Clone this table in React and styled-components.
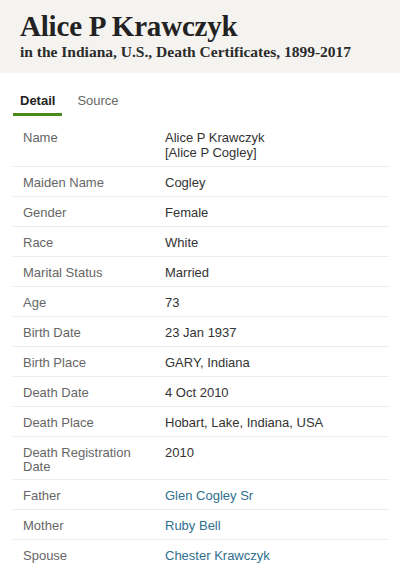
import styled, { createGlobalStyle } from "styled-components";

const GlobalStyle = createGlobalStyle`
  body {
    margin: 0;
    background: #ffffff;
    font-family: "Liberation Sans", Arial, sans-serif;
  }
`;

const Page = styled.div`
  width: 400px;
  height: 578px;
  overflow: hidden;
  background: #ffffff;
`;

const Header = styled.header`
  background: #f5f3f0;
  height: 73px;
  padding: 10px 20px 0;
  box-sizing: border-box;
`;

const Title = styled.h1`
  margin: 0;
  font-family: "Liberation Serif", "Times New Roman", serif;
  font-weight: 700;
  font-size: 29px;
  line-height: 32px;
  color: #222222;
  letter-spacing: -0.2px;
`;

const Subtitle = styled.h2`
  margin: 0;
  font-family: "Liberation Serif", "Times New Roman", serif;
  font-weight: 700;
  font-size: 15.5px;
  line-height: 20px;
  color: #2b2b2b;
  white-space: nowrap;
`;

const Tabs = styled.nav`
  display: flex;
  padding: 20px 13px 0;
`;

const Tab = styled.span`
  font-size: 13px;
  line-height: 16px;
  padding: 0 7px 4px;
  font-weight: ${(p) => (p.$active ? 700 : 400)};
  color: ${(p) => (p.$active ? "#222222" : "#666666")};
  border-bottom: 3px solid ${(p) => (p.$active ? "#4a8a1c" : "transparent")};
  margin-right: 8px;
`;

const Table = styled.div`
  margin: 6px 11px 0 13px;
`;

const Row = styled.div`
  display: grid;
  grid-template-columns: 152px 1fr;
  padding: 8px 0 6px;
  border-bottom: ${(p) => (p.$last ? "none" : "1px solid #ebebeb")};
  font-size: 13px;
  line-height: 15px;
`;

const Label = styled.div`
  padding-left: 10px;
  padding-right: 20px;
  color: #666666;
  line-height: 13.5px;
  padding-top: 1px;
`;

const Value = styled.div`
  color: #333333;
`;

const ValueLink = styled.a`
  color: #2f6f8f;
  text-decoration: none;
`;

const rows = [
  { label: "Name", value: ["Alice P Krawczyk", "[Alice P Cogley]"] },
  { label: "Maiden Name", value: "Cogley" },
  { label: "Gender", value: "Female" },
  { label: "Race", value: "White" },
  { label: "Marital Status", value: "Married" },
  { label: "Age", value: "73" },
  { label: "Birth Date", value: "23 Jan 1937" },
  { label: "Birth Place", value: "GARY, Indiana" },
  { label: "Death Date", value: "4 Oct 2010" },
  { label: "Death Place", value: "Hobart, Lake, Indiana, USA" },
  { label: "Death Registration Date", value: "2010" },
  { label: "Father", value: "Glen Cogley Sr", link: true },
  { label: "Mother", value: "Ruby Bell", link: true },
  { label: "Spouse", value: "Chester Krawczyk", link: true },
];

const App = () => {
  return (
    <Page>
      <GlobalStyle />
      <Header>
        <Title>Alice P Krawczyk</Title>
        <Subtitle>in the Indiana, U.S., Death Certificates, 1899-2017</Subtitle>
      </Header>
      <Tabs>
        <Tab $active>Detail</Tab>
        <Tab>Source</Tab>
      </Tabs>
      <Table>
        {rows.map((r, i) => (
          <Row key={r.label} $last={i === rows.length - 1}>
            <Label>{r.label}</Label>
            <Value>
              {Array.isArray(r.value) ? (
                r.value.map((v) => <div key={v}>{v}</div>)
              ) : r.link ? (
                <ValueLink href="#">{r.value}</ValueLink>
              ) : (
                r.value
              )}
            </Value>
          </Row>
        ))}
      </Table>
    </Page>
  );
};

export default App;
